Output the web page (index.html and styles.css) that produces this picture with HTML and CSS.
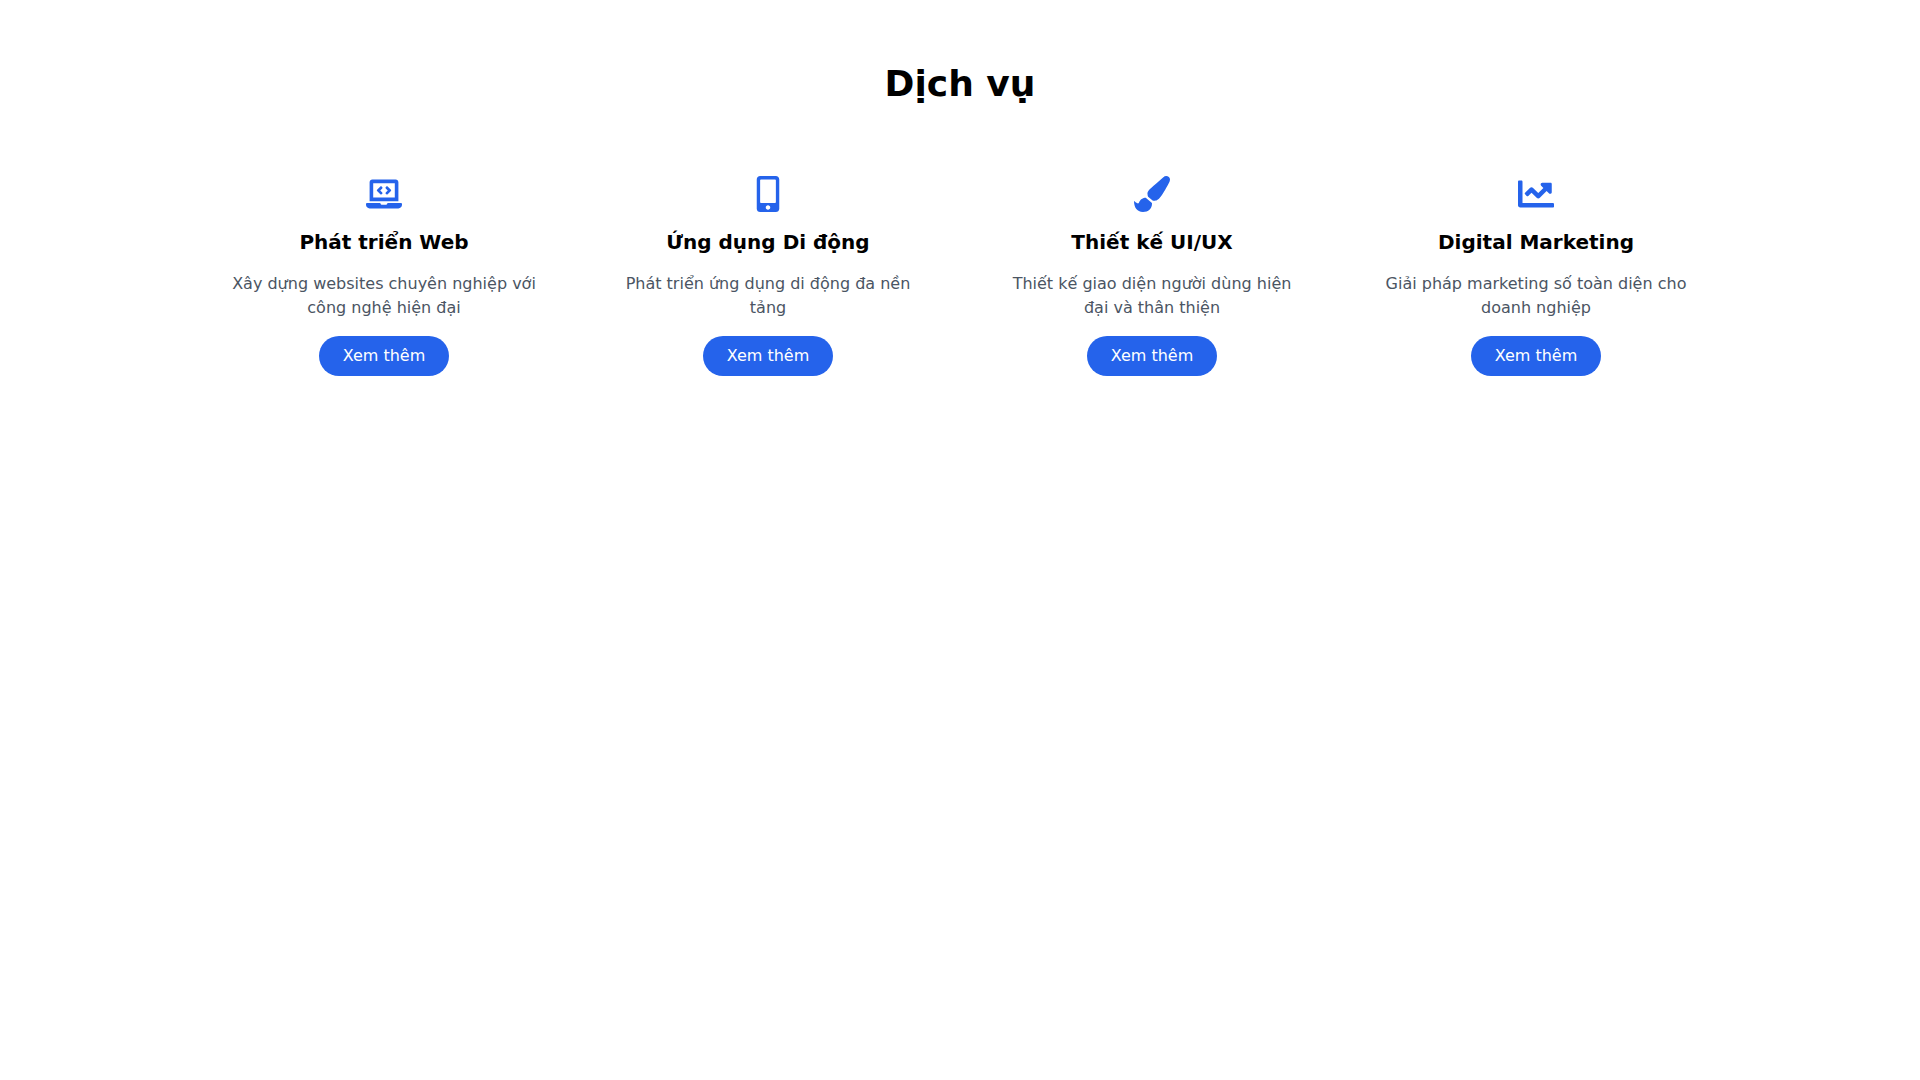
FILE: index.html
```html
<!DOCTYPE html>
<html lang="vi">
<head>
<meta charset="utf-8">
<meta name="viewport" content="width=device-width, initial-scale=1">
<title>Dịch vụ</title>
<link rel="stylesheet" href="styles.css">
</head>
<body>
<main class="services">
  <h1 class="services-title">Dịch vụ</h1>
  <div class="service-grid">
    <article class="service">
      <svg class="service-icon" viewBox="0 0 640 512" aria-hidden="true"><path fill="currentColor" d="M255.03 261.65c6.25 6.25 16.38 6.25 22.63 0l11.31-11.31c6.25-6.25 6.25-16.38 0-22.63L253.25 192l35.71-35.72c6.25-6.25 6.25-16.38 0-22.63l-11.31-11.31c-6.25-6.25-16.38-6.25-22.63 0l-58.34 58.34c-6.25 6.25-6.25 16.38 0 22.63l58.35 58.34zm96.01-11.3l11.31 11.31c6.25 6.25 16.38 6.25 22.63 0l58.34-58.34c6.25-6.25 6.25-16.38 0-22.63l-58.34-58.34c-6.25-6.25-16.38-6.25-22.63 0l-11.31 11.31c-6.25 6.25-6.25 16.38 0 22.63L386.75 192l-35.71 35.72c-6.25 6.25-6.25 16.38 0 22.63zM624 416H381.54c-.74 19.81-14.71 32-32.74 32H288c-18.69 0-33.02-17.47-32.77-32H16c-8.8 0-16 7.2-16 16v16c0 35.2 28.8 64 64 64h512c35.2 0 64-28.8 64-64v-16c0-8.8-7.2-16-16-16zM576 48c0-26.4-21.6-48-48-48H112C85.6 0 64 21.6 64 48v336h512V48zm-64 272H128V64h384v256z"/></svg>
      <h2 class="service-name">Phát triển Web</h2>
      <p class="service-text">Xây dựng websites chuyên nghiệp với công nghệ hiện đại</p>
      <button class="service-more" type="button">Xem thêm</button>
    </article>
    <article class="service">
      <svg class="service-icon" viewBox="0 0 320 512" aria-hidden="true"><path fill="currentColor" d="M272 0H48C21.500 0 0 21.500 0 48v416c0 26.500 21.500 48 48 48h224c26.500 0 48-21.500 48-48V48c0-26.500-21.500-48-48-48zM160 480c-17.700 0-32-14.300-32-32s14.300-32 32-32 32 14.300 32 32-14.300 32-32 32zm112-108c0 6.600-5.400 12-12 12H60c-6.600 0-12-5.400-12-12V60c0-6.600 5.400-12 12-12h200c6.600 0 12 5.400 12 12v312z"/></svg>
      <h2 class="service-name">Ứng dụng Di động</h2>
      <p class="service-text">Phát triển ứng dụng di động đa nền tảng</p>
      <button class="service-more" type="button">Xem thêm</button>
    </article>
    <article class="service">
      <svg class="service-icon" viewBox="0 0 512 512" aria-hidden="true"><path fill="currentColor" d="M167.02 309.34c-40.12 2.58-76.53 17.86-97.19 72.3-2.35 6.21-8 9.98-14.59 9.98-11.11 0-45.46-27.67-55.25-34.35C0 439.62 37.93 512 128 512c75.86 0 128-43.77 128-120.19 0-3.11-.65-6.08-.97-9.13l-88.01-73.34zM457.89 0c-15.16 0-29.37 6.71-40.21 16.45C213.27 199.05 192 203.34 192 257.09c0 13.7 3.25 26.76 8.73 38.7l63.82 53.18c7.21 1.8 14.64 3.03 22.39 3.03 62.11 0 98.11-45.47 211.16-256.46 7.38-14.35 13.9-29.85 13.9-45.99C512 20.64 486 0 457.89 0z"/></svg>
      <h2 class="service-name">Thiết kế UI/UX</h2>
      <p class="service-text">Thiết kế giao diện người dùng hiện đại và thân thiện</p>
      <button class="service-more" type="button">Xem thêm</button>
    </article>
    <article class="service">
      <svg class="service-icon" viewBox="0 0 512 512" aria-hidden="true"><path fill="currentColor" d="M496 384H64V80c0-8.800-7.200-16-16-16H16C7.200 64 0 71.200 0 80v336c0 17.700 14.300 32 32 32h464c8.800 0 16-7.200 16-16v-32c0-8.800-7.200-16-16-16zM464 96H345.900c-21.400 0-32.100 25.900-17 41l32.400 32.400L288 242.800l-73.400-73.400c-12.500-12.500-32.800-12.500-45.300 0l-68.700 68.700c-6.200 6.200-6.200 16.400 0 22.600l22.600 22.600c6.200 6.200 16.400 6.200 22.600 0L192 237.300l73.400 73.400c12.500 12.500 32.800 12.500 45.300 0l96-96 32.400 32.400c15.100 15.100 41 4.400 41-17V112c-.1-8.800-7.300-16-16.100-16z"/></svg>
      <h2 class="service-name">Digital Marketing</h2>
      <p class="service-text">Giải pháp marketing số toàn diện cho doanh nghiệp</p>
      <button class="service-more" type="button">Xem thêm</button>
    </article>
  </div>
</main>
</body>
</html>
```
FILE: styles.css
```css
* {
  box-sizing: border-box;
  margin: 0;
}
body {
  background: #fff;
  color: #000;
  font: 16px/24px "DejaVu Sans", sans-serif;
}
.services {
  max-width: 1536px;
  margin: 0 auto;
  padding: 64px 16px;
}
.services-title {
  margin-bottom: 48px;
  font-size: 36px;
  line-height: 40px;
  text-align: center;
}
.service-grid {
  display: grid;
  grid-template-columns: repeat(auto-fit, minmax(280px, 1fr));
  gap: 32px;
}
.service {
  display: flex;
  flex-direction: column;
  align-items: center;
  padding: 24px;
  text-align: center;
}
.service-icon {
  width: 36px;
  height: 36px;
  margin-bottom: 16px;
  color: #2563eb;
}
.service-name {
  margin-bottom: 16px;
  font-size: 20px;
  line-height: 28px;
}
.service-text {
  margin-bottom: 16px;
  color: #4b5563;
}
.service-more {
  padding: 8px 24px;
  border: 0;
  border-radius: 20px;
  background: #2563eb;
  color: #fff;
  font: inherit;
  cursor: pointer;
}
```
